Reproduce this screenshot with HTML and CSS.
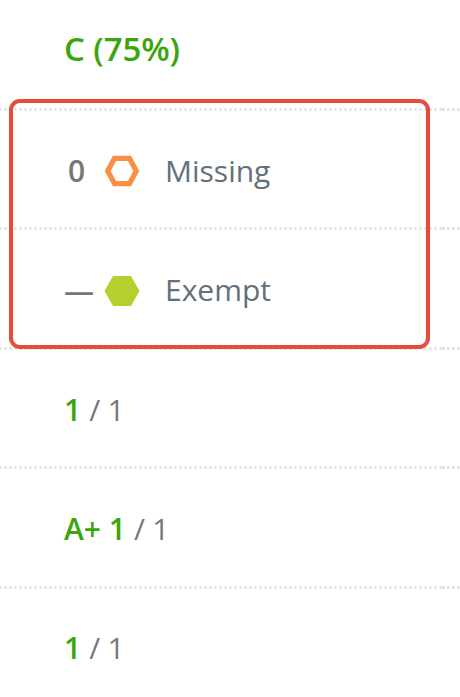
FILE: index.html
```html
<!DOCTYPE html>
<html lang="en">
<head>
    <meta charset="UTF-8">
    <meta name="viewport" content="width=device-width, initial-scale=1.0">
    <title>Grades</title>
    <link rel="stylesheet" href="styles.css">
</head>
<body>
    <div class="grades">
        <div class="row total"><span class="grade">C (75%)</span></div>
        <div class="row">
            <span class="score zero">0</span>
            <svg class="icon" width="36" height="32" viewBox="0 0 36 32">
                <path d="M10.5 3.300H25.500L32.300 16L25.500 28.700H10.500L3.700 16Z" fill="#fff" stroke="#fa8e42" stroke-width="5.2"/>
            </svg>
            <span class="status">Missing</span>
        </div>
        <div class="row">
            <span class="score dash">—</span>
            <svg class="icon" width="36" height="32" viewBox="0 0 36 32">
                <path d="M9 1H27L35.500 16L27 31H9L0.500 16Z" fill="#b4d02c"/>
            </svg>
            <span class="status">Exempt</span>
        </div>
        <div class="row"><span class="grade">1</span><span class="points">/ 1</span></div>
        <div class="row"><span class="grade">A+ 1</span><span class="points">/ 1</span></div>
        <div class="row"><span class="grade">1</span><span class="points">/ 1</span></div>
        <div class="highlight"></div>
    </div>
</body>
</html>
```

FILE: styles.css
```css
body {
    margin: 0;
    background-color: #fff;
    font-family: "Open Sans", sans-serif;
    font-size: 30px;
    overflow: hidden;
}
.grades {
    position: relative;
}
.row {
    display: flex;
    align-items: center;
    box-sizing: border-box;
    height: 119.5px;
    padding-left: 64px;
    /* dotted line of the main cell, then the one of the narrow last cell */
    background-image:
        repeating-linear-gradient(to right, #dedede 0 1px, #f0f0f0 1px 2px, transparent 2px 4px, #f0f0f0 4px 5px),
        repeating-linear-gradient(to right, #dedede 0 2px, #f0f0f0 2px 3px, transparent 3px 5px);
    background-size: 444px 3px, 18px 3px;
    background-position: 0 100%, 442px 100%;
    background-repeat: no-repeat;
    color: #777;
    white-space: pre;
}
.row.total {
    height: 110.5px;
    padding-bottom: 14px;
    font-size: 33px;
}
.row:nth-child(6) {
    padding-bottom: 2px;
    background-image: none;
}
.grade {
    color: #3aa50c;
    font-weight: 600;
}
.total .grade {
    letter-spacing: -0.1px;
}
.points {
    margin-left: 8px;
    letter-spacing: -0.2px;
}
.score {
    box-sizing: border-box;
    width: 40px;
    font-weight: 600;
}
.zero {
    padding-left: 4px;
}
.dash {
    padding-top: 2px;
}
.icon {
    flex: none;
    margin-top: 2px;
}
.status {
    margin-left: 25px;
    color: #62707b;
}
.highlight {
    position: absolute;
    top: 99px;
    left: 9px;
    box-sizing: border-box;
    width: 421px;
    height: 250px;
    border: 4px solid #e74c3a;
    border-radius: 11px;
}
```
